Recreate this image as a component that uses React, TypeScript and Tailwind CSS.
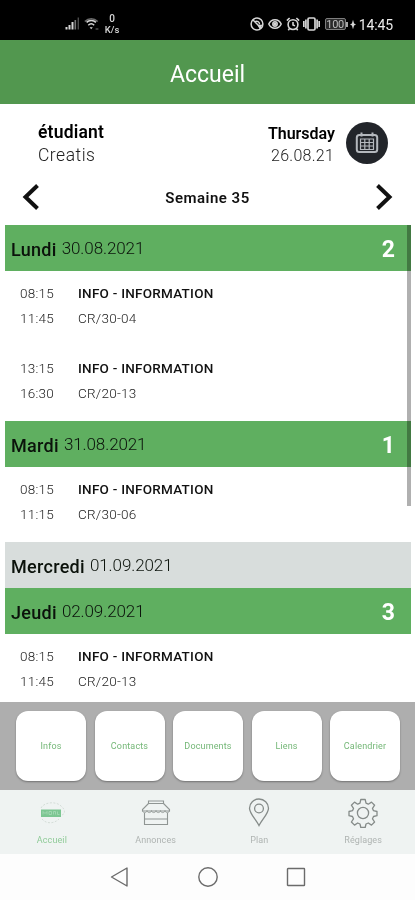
import React from 'react';

interface Course {
  start: string;
  end: string;
  title: string;
  room: string;
}

interface Day {
  name: string;
  date: string;
  count?: number;
  courses: Course[];
}

const INFO = 'INFO - INFORMATION';

const days: Day[] = [
  {
    name: 'Lundi',
    date: '30.08.2021',
    count: 2,
    courses: [
      { start: '08:15', end: '11:45', title: INFO, room: 'CR/30-04' },
      { start: '13:15', end: '16:30', title: INFO, room: 'CR/20-13' },
    ],
  },
  {
    name: 'Mardi',
    date: '31.08.2021',
    count: 1,
    courses: [{ start: '08:15', end: '11:15', title: INFO, room: 'CR/30-06' }],
  },
  { name: 'Mercredi', date: '01.09.2021', courses: [] },
  {
    name: 'Jeudi',
    date: '02.09.2021',
    count: 3,
    courses: [{ start: '08:15', end: '11:45', title: INFO, room: 'CR/20-13' }],
  },
];

const shortcuts = ['Infos', 'Contacts', 'Documents', 'Liens', 'Calendrier'];

const StatusBar = () => (
  <div className="flex h-10 shrink-0 items-center justify-between bg-black pt-2 pr-[22px] pl-[65px] text-[#d6d6d6]">
    <div className="flex items-center">
      <svg width="15" height="14" viewBox="0 0 15 14" fill="currentColor">
        <rect x="0.5" y="10" width="2" height="2.5" />
        <rect x="3.5" y="8" width="2" height="4.5" />
        <rect x="6.5" y="5" width="2" height="7.5" />
        <rect x="9.5" y="3" width="1.6" height="9.5" opacity="0.55" />
        <rect x="12.6" y="0.5" width="1.4" height="12" opacity="0.35" />
      </svg>
      <svg className="ml-[4px]" width="15" height="14" viewBox="0 0 15 14" fill="none" stroke="currentColor" strokeWidth="1.5">
        <path d="M.8 4.5C4.5.8 10 .8 13.7 4.5" opacity="0.5" />
        <path d="M2.6 5.4C5 3 9.5 3 11.9 5.4" />
        <path d="M4.3 8.2c1.7-1.6 4.2-1.6 5.9 0" />
        <path d="M7.2 12.2 5.6 10.3h3.2z" fill="currentColor" stroke="none" />
        <path d="M11.6 12h2.8" opacity="0.35" />
      </svg>
      <div className="ml-[5px] flex w-4 flex-col items-center text-[10px] leading-[11px] font-medium">
        <span>0</span>
        <span className="text-[9.5px]">K/s</span>
      </div>
    </div>
    <div className="flex items-center">
      <svg width="14" height="14" viewBox="0 0 14 14" fill="none" stroke="currentColor" strokeWidth="1.5">
        <circle cx="7" cy="7" r="5.9" />
        <path d="M2.8 2.8 11 11M5 4.6c2.2-1 4.6.4 4.6 2.8" />
        <path d="M7.6 8.2 12.6 7.6 9.8 12.4z" fill="currentColor" stroke="none" />
      </svg>
      <svg className="ml-1" width="14" height="12" viewBox="0 0 14 12" fill="none" stroke="currentColor" strokeWidth="1.5">
        <path d="M.8 6C3.2.3 10.8.3 13.2 6 10.8 11.7 3.2 11.7.8 6z" />
        <circle cx="7" cy="6" r="2.2" />
        <circle cx="7" cy="6" r="1" fill="currentColor" />
      </svg>
      <svg className="ml-1" width="14" height="14" viewBox="0 0 14 14" fill="none" stroke="currentColor" strokeWidth="1.6">
        <circle cx="7" cy="7.6" r="4.9" />
        <path d="M7 4.9v3l2 1M.9 3.6 3.6 1M13.1 3.6 10.4 1M3.6 11.4l-1.3 1.8M10.4 11.4l1.3 1.8" />
      </svg>
      <svg className="ml-[3px]" width="17" height="14" viewBox="0 0 17 14" fill="none" stroke="currentColor" strokeWidth="1.7">
        <rect x="5" y="1" width="7" height="12" rx="1.2" />
        <path d="M2.9 2.5v9M14.1 2.5v9M.8 4v6M16.2 4v6" />
      </svg>
      <div className="ml-[5px] flex h-[12px] w-[21px] items-center justify-center rounded-[2px] border border-[#7e7e7e] bg-[#2a2a2a] text-[11px] leading-none tracking-[-0.3px] text-[#bcbcbc]">
        100
      </div>
      <div className="h-[5px] w-[2px] bg-[#a8a8a8]" />
      <svg className="ml-[2px]" width="6" height="11" viewBox="0 0 6 11" fill="currentColor">
        <path d="M3 .8 4.1 4.4 6 5.5 4.1 6.6 3 10.2 1.9 6.6 0 5.5 1.9 4.4z" />
      </svg>
      <span className="ml-[3px] pt-px text-[14px] leading-[14px] tracking-[-0.1px] text-[#ececec]">14:45</span>
    </div>
  </div>
);

const StudentHeader = () => (
  <div className="flex h-[72px] shrink-0 items-end justify-between pr-[27px] pl-[38px] text-black">
    <div className="flex flex-col pb-[9px]">
      <span className="text-[17.5px] leading-[23px] font-semibold tracking-[0.2px]">étudiant</span>
      <span className="text-[17.5px] leading-[23px] font-light tracking-[0.5px] text-[#222]">Creatis</span>
    </div>
    <div className="flex items-center pb-[10px]">
      <div className="flex flex-col items-end pt-1">
        <span className="-mr-px text-[16px] leading-[22px] font-semibold">Thursday</span>
        <span className="text-[16px] leading-[21px] font-light tracking-[0.25px] text-[#222]">26.08.21</span>
      </div>
      <div className="ml-3 flex size-[42px] items-center justify-center rounded-full bg-[#22252a]">
        <svg width="24" height="22" viewBox="0 0 24 22" fill="none" stroke="#b4b8bd">
          <rect x="1.8" y="3" width="20.4" height="17" rx="2.5" strokeWidth="2" />
          <path d="M6.5.5v4M17.5.5v4" strokeWidth="2" />
          <path d="M5.5 7h13v10.5h-13zM5.5 10.5h13M5.5 14h13M9.8 7v10.5M14.2 7v10.5" strokeWidth="1.2" />
        </svg>
      </div>
    </div>
  </div>
);

const WeekNav = () => (
  <div className="flex h-[49px] shrink-0 items-center justify-between px-[22px] pb-[7px]">
    <svg width="18" height="28" viewBox="0 0 18 28" fill="none" stroke="#111" strokeWidth="4">
      <path d="M15.5 2.5 3.5 14l12 11.5" />
    </svg>
    <span className="pt-0.5 text-[15px] leading-5 font-semibold tracking-[0.5px] text-[#111]">Semaine 35</span>
    <svg width="18" height="28" viewBox="0 0 18 28" fill="none" stroke="#111" strokeWidth="4">
      <path d="M2.5 2.5 14.5 14l-12 11.5" />
    </svg>
  </div>
);

const DayBlock: React.FC<{ day: Day }> = ({ day }) => (
  <div className="shrink-0">
    <div className={`flex h-[46px] items-center pt-[2px] pr-[16px] pl-[6px] ${day.count ? 'bg-[#5faf60]' : 'bg-[#d8dddc]'}`}>
      <span className="text-[18px] font-medium tracking-[0.3px] text-[#0b120b]">{day.name}</span>
      <span className="ml-[5px] text-[17px] font-light tracking-[-0.1px] text-[#0b120b]">{day.date}</span>
      {day.count && <span className="ml-auto text-[23px] leading-none font-bold text-white">{day.count}</span>}
    </div>
    {day.courses.map((course) => (
      <div key={course.start} className="flex h-[75px] pt-[9.5px] pl-[15px] text-[13.5px] leading-[25px] text-[#111]">
        <div className="flex w-[58px] flex-col font-light tracking-[0.25px] text-[#222]">
          <span>{course.start}</span>
          <span>{course.end}</span>
        </div>
        <div className="flex flex-col">
          <span className="font-medium tracking-[0.25px]">{course.title}</span>
          <span className="font-light tracking-[0.25px] text-[#222]">{course.room}</span>
        </div>
      </div>
    ))}
  </div>
);

const HomeIcon = () => (
  <svg width="30" height="26" viewBox="0 0 30 26" fill="none">
    <path d="M4 8C7 2 19 1 24 6c5 4 4 8 1 9M5 19c4 5 12 5 17 0" stroke="#cdd7d0" strokeWidth="0.8" strokeDasharray="2 1.5" />
    <rect x="4" y="9.5" width="20" height="7.5" fill="#7cc692" />
    <path d="M6 14.5v-3l2 2 2-2v3M12 11.5v3h2.5v-3H12M16.5 14.5v-3h2v3M20.5 11.5v3h2" stroke="#a8dab7" strokeWidth="0.8" />
  </svg>
);

const ShopIcon = () => (
  <svg width="30" height="26" viewBox="0 0 30 26" fill="none" stroke="#8f9593" strokeWidth="1.1">
    <path d="M7.5 1h15v2.5h-15zM7.5 3.5 1.5 9.5V11h27V9.5l-6-6" />
    <path d="M1.5 10.5c0 2.8 4.5 2.8 4.5 0 0 2.8 4.5 2.8 4.5 0 0 2.8 4.5 2.8 4.5 0 0 2.8 4.5 2.8 4.5 0 0 2.8 4.5 2.8 4.5 0 0 2.8 4.5 2.8 4.5 0" strokeWidth="0.8" />
    <path d="M3.5 13v11.5h23V13M3.5 19h23" />
  </svg>
);

const PinIcon = () => (
  <svg width="22" height="29" viewBox="0 0 22 29" fill="none" stroke="#858b89" strokeWidth="1.3">
    <path d="M11 27.5C8 21.5 1.5 15.5 1.5 10.2a9.5 9.2 0 0 1 19 0c0 5.3-6.5 11.3-9.5 17.3z" />
    <circle cx="11" cy="10.5" r="4.4" />
  </svg>
);

const GearIcon = () => (
  <svg width="30" height="30" viewBox="0 0 30 30" fill="none" stroke="#858b89" strokeWidth="1.3" strokeLinejoin="round">
    <circle cx="15" cy="15" r="5.6" />
    <path d="M12.8 1.5h4.4l.8 3.7 2.3 1 3.2-2.1 3.1 3.1-2.1 3.2 1 2.3 3.5.8v4.2l-3.5.8-1 2.3 2.1 3.2-3.1 3.1-3.2-2.1-2.3 1-.8 3.5h-4.4l-.8-3.5-2.3-1-3.2 2.1L3.4 24l2.1-3.2-1-2.3-3.5-.8v-4.2l3.5-.8 1-2.3-2.1-3.2 3.1-3.1 3.2 2.1 2.3-1z" />
  </svg>
);

const tabs = [
  { label: 'Accueil', icon: <HomeIcon />, active: true },
  { label: 'Annonces', icon: <ShopIcon />, active: false },
  { label: 'Plan', icon: <PinIcon />, active: false },
  { label: 'Réglages', icon: <GearIcon />, active: false },
];

const App: React.FC = () => {
  return (
    <div className="flex h-[900px] w-[415px] flex-col overflow-hidden bg-white font-['Roboto',sans-serif]">
      <StatusBar />

      <header className="flex h-16 shrink-0 items-center justify-center bg-[#52974f] pt-1">
        <h1 className="text-[23px] leading-none text-white">Accueil</h1>
      </header>

      <StudentHeader />
      <WeekNav />

      {/* Timetable */}
      <div className="relative mr-1 ml-[5px] flex h-[477px] shrink-0 flex-col overflow-hidden">
        {days.map((day) => (
          <DayBlock key={day.name} day={day} />
        ))}
        {/* Scrollbar thumb */}
        <div className="absolute top-0 right-0 h-[281px] w-1 bg-[#b0b0b0] mix-blend-multiply" />
      </div>

      {/* Shortcuts */}
      <div className="flex h-[88px] shrink-0 gap-[8.5px] bg-[#aeaeae] pt-[9px] pl-4">
        {shortcuts.map((label) => (
          <div
            key={label}
            className="flex size-[70px] shrink-0 items-center justify-center rounded-[12px] bg-white pt-px text-[9px] tracking-[0.15px] text-[#74b777] shadow-[0_1px_2px_rgba(0,0,0,0.35)]"
          >
            {label}
          </div>
        ))}
      </div>

      {/* Tab bar */}
      <nav className="grid h-16 shrink-0 grid-cols-4 bg-[#eff3f2]">
        {tabs.map((tab) => (
          <div key={tab.label} className="flex flex-col items-center pt-[7px]">
            <div className="flex h-[31px] items-center">{tab.icon}</div>
            <span className={`mt-[6px] text-[9px] leading-3 tracking-[0.1px] ${tab.active ? 'text-[#8fcb98]' : 'text-[#afb4b2]'}`}>
              {tab.label}
            </span>
          </div>
        ))}
      </nav>

      {/* Android navigation */}
      <div className="flex h-[46px] shrink-0 items-center justify-center gap-[68px] bg-[#fdfdfd]">
        <svg width="20" height="22" viewBox="0 0 20 22" fill="none" stroke="#6b6b6b" strokeWidth="1.4" strokeLinejoin="round">
          <path d="M17 2v18L1.5 11z" />
        </svg>
        <svg width="20" height="20" viewBox="0 0 20 20" fill="none" stroke="#6b6b6b" strokeWidth="1.4">
          <circle cx="10" cy="10" r="9.2" />
        </svg>
        <svg width="20" height="20" viewBox="0 0 20 20" fill="none" stroke="#6b6b6b" strokeWidth="1.4">
          <rect x="1.5" y="1.5" width="17" height="17" rx="0.5" />
        </svg>
      </div>
    </div>
  );
};

export default App;
